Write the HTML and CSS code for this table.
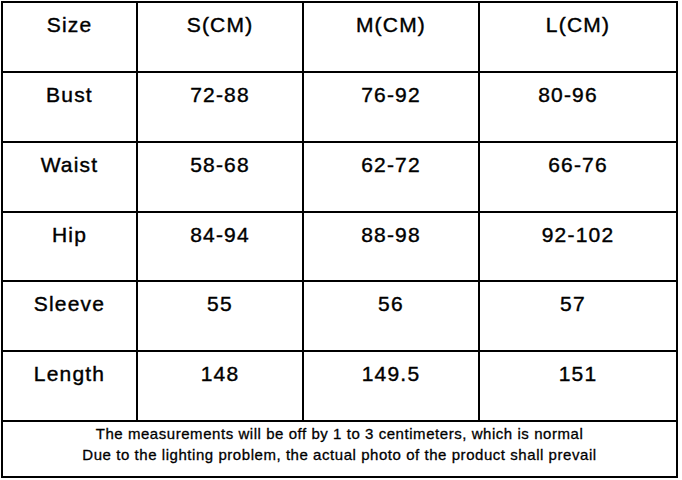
FILE: index.html
```html
<!DOCTYPE html>
<html lang="en">

<head>
    <meta charset="UTF-8">
    <meta name="viewport" content="width=device-width, initial-scale=1.0">
    <title>Size Chart</title>
    <link rel="stylesheet" href="styles.css">
</head>

<body>
    <table class="chart">
        <colgroup>
            <col class="c1">
            <col class="c2">
            <col class="c3">
            <col class="c4">
        </colgroup>
        <tr class="r1">
            <td>Size</td>
            <td>S(CM)</td>
            <td>M(CM)</td>
            <td>L(CM)</td>
        </tr>
        <tr class="r2">
            <td>Bust</td>
            <td>72-88</td>
            <td>76-92</td>
            <td class="nudge-lg">80-96</td>
        </tr>
        <tr class="r3">
            <td>Waist</td>
            <td>58-68</td>
            <td>62-72</td>
            <td>66-76</td>
        </tr>
        <tr class="r4">
            <td>Hip</td>
            <td>84-94</td>
            <td>88-98</td>
            <td>92-102</td>
        </tr>
        <tr class="r5">
            <td>Sleeve</td>
            <td>55</td>
            <td>56</td>
            <td class="nudge-sm">57</td>
        </tr>
        <tr class="r6">
            <td>Length</td>
            <td>148</td>
            <td>149.5</td>
            <td>151</td>
        </tr>
        <tr class="note">
            <td colspan="4">
                The measurements will be off by 1 to 3 centimeters, which is normal<br>
                Due to the lighting problem, the actual photo of the product shall prevail
            </td>
        </tr>
    </table>
</body>

</html>
```

FILE: styles.css
```css
body {
    margin: 0;
    padding: 1px;
    background-color: #fff;
}

.chart {
    table-layout: fixed;
    border-collapse: collapse;
    width: 677px;
    font-family: "Liberation Sans", Arial, sans-serif;
    color: #000;
}

.chart .c1 {
    width: 135px;
}

.chart .c2 {
    width: 166px;
}

.chart .c3 {
    width: 176px;
}

.chart .c4 {
    width: 198px;
}

.chart td {
    border: 2px solid #000;
    padding: 11px 0 0;
    vertical-align: top;
    text-align: center;
    font-size: 21px;
    line-height: 22px;
    letter-spacing: 1.2px;
    -webkit-text-stroke: 0.4px #000;
}

.chart .r1,
.chart .r2,
.chart .r3,
.chart .r5,
.chart .r6 {
    height: 70px;
}

.chart .r4 {
    height: 69px;
}

.chart .nudge-lg {
    padding-right: 20px;
}

.chart .nudge-sm {
    padding-right: 10px;
}

.chart .note td {
    height: 53px;
    padding: 1px 0 0;
    font-size: 15px;
    line-height: 21px;
    letter-spacing: 0.55px;
    -webkit-text-stroke: 0.3px #000;
}
```
